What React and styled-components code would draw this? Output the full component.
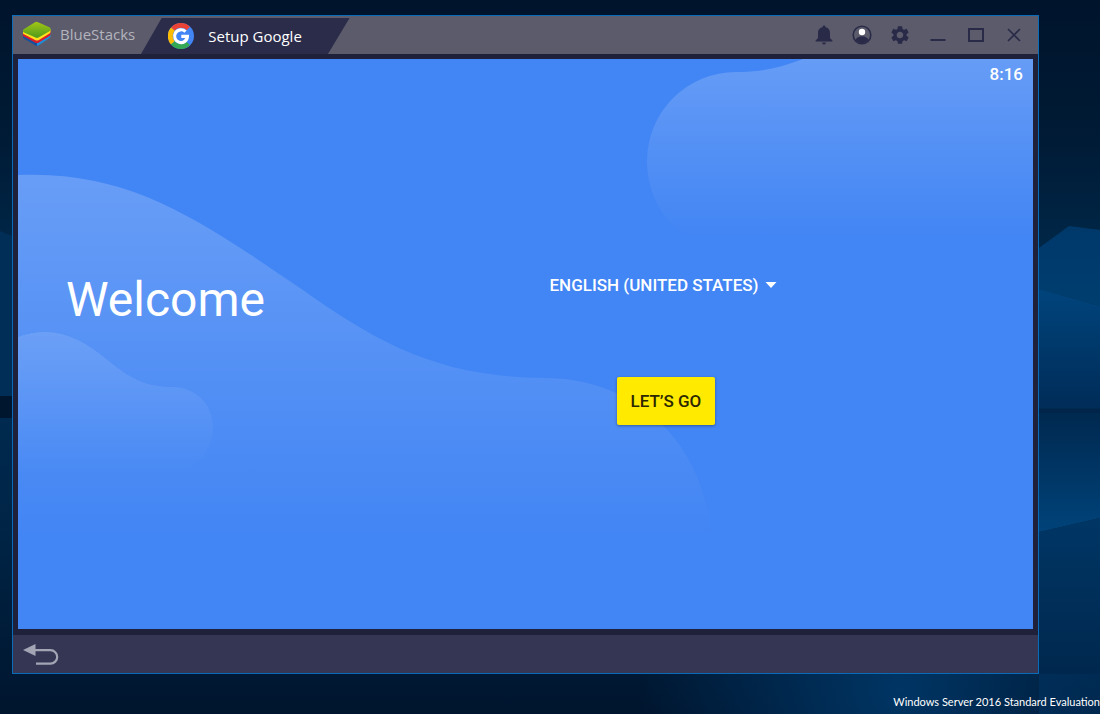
import React from 'react';
import styled, { createGlobalStyle } from 'styled-components';

function App() {
  return (
    <Desktop>
      <GlobalStyle />
      <Wallpaper />
      <AppWindow>
        <TitleBar>
          <Tabs>
            <HomeTab type="button">
              <BlueStacksLogo />
              BlueStacks
            </HomeTab>
            <ActiveTab type="button">
              <TabShape viewBox="0 0 212 36" preserveAspectRatio="none">
                <path d="M0 36 L21 0 H212 L190 36 Z" fill="#2b2c4a" />
              </TabShape>
              <GoogleLogo />
              <TabLabel>Setup Google</TabLabel>
            </ActiveTab>
          </Tabs>
          <Controls>
            <Control type="button" aria-label="Notifications">
              <svg width="18" height="20" viewBox="0 0 18 20" fill="currentColor">
                <path d="M9 0.4c.8 0 1.4.6 1.4 1.4v.5C13.8 3 15 5.300 15 8v5l2.400 2.400v1.200H.6v-1.200L3 13V8c0-2.700 1.200-5 4.600-5.700v-.5C7.600 1 8.200.4 9 .4zM7 17.600h4a2 2 0 0 1-4 0z" />
              </svg>
            </Control>
            <Control type="button" aria-label="Account">
              <svg width="20" height="20" viewBox="0 0 20 20">
                <circle cx="10" cy="10" r="8.800" fill="none" stroke="currentColor" strokeWidth="1.600" />
                <path d="M3.500 15c1-2.600 3.800-3.800 6.500-3.800s5.500 1.200 6.500 3.800c-1.500 2-3.800 3.200-6.500 3.200s-5-1.200-6.500-3.200z" fill="currentColor" />
                <circle cx="10" cy="7" r="3.200" fill="#fff" />
              </svg>
            </Control>
            <Control type="button" aria-label="Settings">
              <svg width="22" height="22" viewBox="0 0 24 24" fill="currentColor">
                <path d="M19.140 12.940c.04-.3.060-.61.060-.94 0-.32-.02-.64-.07-.94l2.030-1.580a.49.49 0 0 0 .12-.61l-1.920-3.320a.488.488 0 0 0-.59-.22l-2.390.96c-.5-.38-1.030-.7-1.620-.94l-.36-2.540a.484.484 0 0 0-.48-.41h-3.840c-.24 0-.43.17-.47.41l-.36 2.540c-.59.24-1.130.57-1.620.94l-2.390-.96c-.22-.08-.47 0-.59.22L2.740 8.870c-.12.21-.08.47.12.61l2.030 1.580c-.05.3-.09.63-.09.94s.02.64.07.94l-2.030 1.580a.49.49 0 0 0-.12.61l1.920 3.320c.12.22.37.29.59.22l2.390-.96c.5.38 1.030.7 1.620.94l.36 2.540c.05.24.24.41.48.41h3.840c.24 0 .44-.17.47-.41l.36-2.540c.59-.24 1.130-.56 1.620-.94l2.390.96c.22.08.47 0 .59-.22l1.920-3.320c.12-.22.07-.47-.12-.61l-2.010-1.580zM12 15.600A3.610 3.610 0 0 1 8.400 12c0-1.980 1.620-3.600 3.600-3.600s3.600 1.620 3.600 3.600-1.620 3.600-3.600 3.600z" />
              </svg>
            </Control>
            <Control type="button" aria-label="Minimize">
              <svg width="16" height="16" viewBox="0 0 16 16">
                <path d="M0.500 13H15.500" stroke="currentColor" strokeWidth="2" />
              </svg>
            </Control>
            <Control type="button" aria-label="Maximize">
              <svg width="16" height="14" viewBox="0 0 16 14">
                <rect x="1" y="1" width="14" height="12" fill="none" stroke="currentColor" strokeWidth="2" />
              </svg>
            </Control>
            <Control type="button" aria-label="Close">
              <svg width="14" height="14" viewBox="0 0 14 14">
                <path d="M1 1l12 12M13 1L1 13" stroke="currentColor" strokeWidth="1.600" />
              </svg>
            </Control>
          </Controls>
        </TitleBar>

        <Screen>
          <Waves />
          <Clock>8:16</Clock>
          <Setup>
            <Welcome>Welcome</Welcome>
            <Actions>
              <Language>
                <LanguageSelect aria-label="Language" defaultValue="en-US">
                  <option value="en-US">ENGLISH (UNITED STATES)</option>
                </LanguageSelect>
                <svg width="12" height="6" viewBox="0 0 12 6" fill="#fff">
                  <path d="M0.500 0h11L6 6z" />
                </svg>
              </Language>
              <StartButton type="button">LET’S GO</StartButton>
            </Actions>
          </Setup>
        </Screen>

        <NavBar>
          <BackButton type="button" aria-label="Back">
            <svg width="36" height="22" viewBox="0 0 36 22">
              <path d="M12 7.200h15.500a6.700 6.700 0 0 1 0 13.400H13" fill="none" stroke="#a3a5b5" strokeWidth="2.200" />
              <path d="M0 7L12.500 1v12z" fill="#a3a5b5" />
            </svg>
          </BackButton>
        </NavBar>
      </AppWindow>
      <Watermark>Windows Server 2016 Standard Evaluation</Watermark>
    </Desktop>
  );
}

function BlueStacksLogo() {
  return (
    <svg width="28" height="26" viewBox="0 0 28 26">
      <defs>
        <linearGradient id="logo-top" x1="0" y1="0" x2="0" y2="1">
          <stop offset="0" stopColor="#a3c614" />
          <stop offset="1" stopColor="#4f9a1e" />
        </linearGradient>
      </defs>
      <path d="M0 13v3q0 1 1 1.600L12.500 24.500q1.500.8 3 0L14 17z" fill="#14509e" />
      <path d="M27.500 12v3.500q0 1-1 1.600L15.500 24.500q-1 .5-1.500.4V17z" fill="#1d8fd8" />
      <path d="M0 11v3.200q0 .8 1 1.300L12.500 21.700q1.500.8 3 0L26.500 15q1-.6 1-1.500V10z" fill="#d81e2c" />
      <path d="M0 9v3q0 .8 1 1.300L12.500 19.200q1.500.8 3 0L26.500 12.500q1-.6 1-1.500V8z" fill="#ffe01b" />
      <path
        d="M0 9.500q0-1 1-1.600L12 1.200q1.500-.8 3 0L26.500 6.300q1 .5 1 1.400v1.200q0 .8-1 1.400L15.500 16.500q-1.500.8-3 0L1 11.500q-1-.5-1-1.300z"
        fill="url(#logo-top)"
      />
    </svg>
  );
}

function GoogleLogo() {
  return (
    <svg width="26" height="26" viewBox="0 0 26 26">
      <circle cx="13" cy="13" r="13" fill="#4285f4" />
      <path d="M13 13L3 4.500A13 13 0 0 1 22 3.700z" fill="#ea4335" />
      <path d="M13 13L3 4.500a13 13 0 0 0 0 17z" fill="#fbbc05" />
      <path d="M13 13L3 21.500a13 13 0 0 0 19 .8z" fill="#34a853" />
      <circle cx="13" cy="13" r="8.300" fill="#4285f4" />
      <path d="M17.500 8.600A6.400 6.400 0 1 0 19.400 13.400H13.300" fill="none" stroke="#fff" strokeWidth="3.200" />
    </svg>
  );
}

function Wallpaper() {
  return (
    <WallpaperArt viewBox="0 0 1100 714" preserveAspectRatio="none" aria-hidden="true">
      <defs>
        <linearGradient id="night" x1="0" y1="0" x2="0" y2="1">
          <stop offset="0" stopColor="#00142c" />
          <stop offset="0.2" stopColor="#001b36" />
          <stop offset="0.35" stopColor="#002748" />
          <stop offset="0.55" stopColor="#002b52" />
          <stop offset="0.75" stopColor="#002445" />
          <stop offset="1" stopColor="#00152e" />
        </linearGradient>
        <linearGradient id="beam-upper" x1="0" y1="0" x2="0" y2="1">
          <stop offset="0" stopColor="#00386a" />
          <stop offset="1" stopColor="#003e70" />
        </linearGradient>
        <linearGradient id="beam-middle" x1="0" y1="0" x2="0" y2="1">
          <stop offset="0" stopColor="#00447c" />
          <stop offset="1" stopColor="#002c58" />
        </linearGradient>
        <linearGradient id="beam-lower" x1="0" y1="0" x2="0" y2="1">
          <stop offset="0" stopColor="#002a52" />
          <stop offset="1" stopColor="#00437a" />
        </linearGradient>
        <linearGradient id="beam-floor" x1="0" y1="0" x2="0" y2="1">
          <stop offset="0" stopColor="#003665" />
          <stop offset="1" stopColor="#002448" />
        </linearGradient>
        <radialGradient id="floor-glow" cx="900" cy="690" r="260" gradientUnits="userSpaceOnUse">
          <stop offset="0" stopColor="#003564" />
          <stop offset="1" stopColor="#003564" stopOpacity="0" />
        </radialGradient>
      </defs>
      <rect width="1100" height="714" fill="url(#night)" />
      <path d="M0 231l12 5v160H0z" fill="#002e56" />
      <path d="M0 396h12v22H0z" fill="#00162f" />
      <path d="M1039 248l30-22 31 4v76l-61-17z" fill="url(#beam-upper)" />
      <path d="M1039 289l61 17v102h-61z" fill="url(#beam-middle)" />
      <path d="M1039 409h61v4h-61z" fill="#00244a" />
      <path d="M1039 420h61v98l-61 14z" fill="url(#beam-lower)" />
      <path d="M1039 532l61-14v196h-61z" fill="url(#beam-floor)" />
      <rect y="674" width="1100" height="40" fill="url(#floor-glow)" />
    </WallpaperArt>
  );
}

function Waves() {
  return (
    <WaveArt viewBox="18 59 1015 570" preserveAspectRatio="none" aria-hidden="true">
      <defs>
        <linearGradient id="wave-large" gradientUnits="userSpaceOnUse" x1="0" y1="175" x2="0" y2="540">
          <stop offset="0" stopColor="#fff" stopOpacity="0.2" />
          <stop offset="1" stopColor="#fff" stopOpacity="0" />
        </linearGradient>
        <linearGradient id="wave-small" gradientUnits="userSpaceOnUse" x1="0" y1="331" x2="0" y2="475">
          <stop offset="0" stopColor="#fff" stopOpacity="0.12" />
          <stop offset="1" stopColor="#fff" stopOpacity="0" />
        </linearGradient>
        <linearGradient id="wave-corner" gradientUnits="userSpaceOnUse" x1="0" y1="50" x2="0" y2="238">
          <stop offset="0" stopColor="#fff" stopOpacity="0.2" />
          <stop offset="1" stopColor="#fff" stopOpacity="0" />
        </linearGradient>
      </defs>
      <path
        d="M18 175C130 170 200 220 300 288C380 345 440 377 545 378C640 379 705 445 712 540H18Z"
        fill="url(#wave-large)"
      />
      <path
        d="M18 337C52 325 78 335 110 362C130 378 145 387 171 387C197 387 213 405 213 428C213 448 198 470 170 475H18Z"
        fill="url(#wave-small)"
      />
      <path
        d="M1033 59H803C780 68 760 72 736 72A89 89 0 0 0 647 161C647 192 662 222 690 238H1033Z"
        fill="url(#wave-corner)"
      />
    </WaveArt>
  );
}

const GlobalStyle = createGlobalStyle`
  * {
    box-sizing: border-box;
  }

  body {
    margin: 0;
    background: #00152e;
  }

  button,
  select {
    margin: 0;
    padding: 0;
    border: 0;
    background: none;
    color: inherit;
    font: inherit;
    cursor: pointer;
  }

  svg {
    display: block;
    flex-shrink: 0;
  }
`;

const Desktop = styled.div`
  position: relative;
  display: flex;
  flex-direction: column;
  min-height: 100vh;
  padding: 15px 0 0 12px;
  font-family: 'Open Sans', 'Noto Sans', sans-serif;
`;

const WallpaperArt = styled.svg`
  position: absolute;
  inset: 0;
  width: 100%;
  height: 100%;
`;

const AppWindow = styled.main`
  position: relative;
  display: flex;
  flex-direction: column;
  flex: 1;
  margin-right: 61px;
  border: 1px solid #0a6cb8;
  background: #1f2039;
`;

const TitleBar = styled.header`
  display: flex;
  justify-content: space-between;
  height: 38px;
  background: #5b5b6b;
`;

const Tabs = styled.nav`
  display: flex;
  align-items: flex-end;
`;

const HomeTab = styled.button`
  display: flex;
  align-items: center;
  gap: 9px;
  height: 38px;
  padding: 0 0 2px 10px;
  color: #b4b4bd;
  font-size: 15px;
`;

const ActiveTab = styled.button`
  position: relative;
  display: flex;
  align-items: center;
  gap: 14px;
  height: 36px;
  padding: 0 48px 0 27px;
  margin-left: 6px;
  color: #fff;
  font-size: 15px;

  & > svg:not(:first-child) {
    position: relative;
  }
`;

const TabShape = styled.svg`
  position: absolute;
  inset: 0;
  width: 100%;
  height: 100%;
`;

const TabLabel = styled.span`
  position: relative;
`;

const Controls = styled.div`
  display: flex;
  align-items: center;
  padding-right: 5px;
`;

const Control = styled.button`
  display: flex;
  align-items: center;
  justify-content: center;
  width: 38px;
  height: 38px;
  color: #292a48;
`;

const Screen = styled.section`
  position: relative;
  display: flex;
  flex-direction: column;
  flex: 1;
  margin: 5px 5px 6px;
  color: #fff;
  font-family: Roboto, sans-serif;
  background: #4285f4;
`;

const WaveArt = styled.svg`
  position: absolute;
  inset: 0;
  width: 100%;
  height: 100%;
`;

const Clock = styled.time`
  position: relative;
  padding: 5px 10px 0 0;
  font-size: 17px;
  font-weight: 500;
  line-height: 20px;
  text-align: right;
`;

const Setup = styled.div`
  position: relative;
  display: grid;
  grid-template-columns: 1fr 1fr;
  padding: 188px 48px 0;
`;

const Welcome = styled.h1`
  margin: 0;
  font-size: 48px;
  font-weight: 400;
  line-height: 56px;
`;

const Actions = styled.div`
  display: flex;
  flex-direction: column;
  align-items: flex-start;
  gap: 80px;
  padding: 1px 0 0 24px;
`;

const Language = styled.label`
  display: flex;
  align-items: center;
  gap: 5px;
  height: 24px;
`;

const LanguageSelect = styled.select`
  appearance: none;
  font-size: 17px;
  font-weight: 500;
  line-height: 24px;
`;

const StartButton = styled.button`
  height: 48px;
  padding: 0 14px;
  margin-left: 67px;
  border-radius: 2px;
  color: #2b2800;
  font-size: 17px;
  font-weight: 500;
  background: #ffea00;
  box-shadow: 0 1px 3px rgba(0, 0, 0, 0.35);
`;

const NavBar = styled.footer`
  display: flex;
  align-items: center;
  height: 38px;
  padding-left: 10px;
  background: #343654;
`;

const BackButton = styled.button`
  display: flex;
`;

const Watermark = styled.p`
  position: relative;
  margin: 0;
  padding: 20px 0 4px;
  color: #fff;
  font-family: Lato, 'Open Sans', sans-serif;
  font-size: 11px;
  line-height: 16px;
  text-align: right;
`;

export default App;
